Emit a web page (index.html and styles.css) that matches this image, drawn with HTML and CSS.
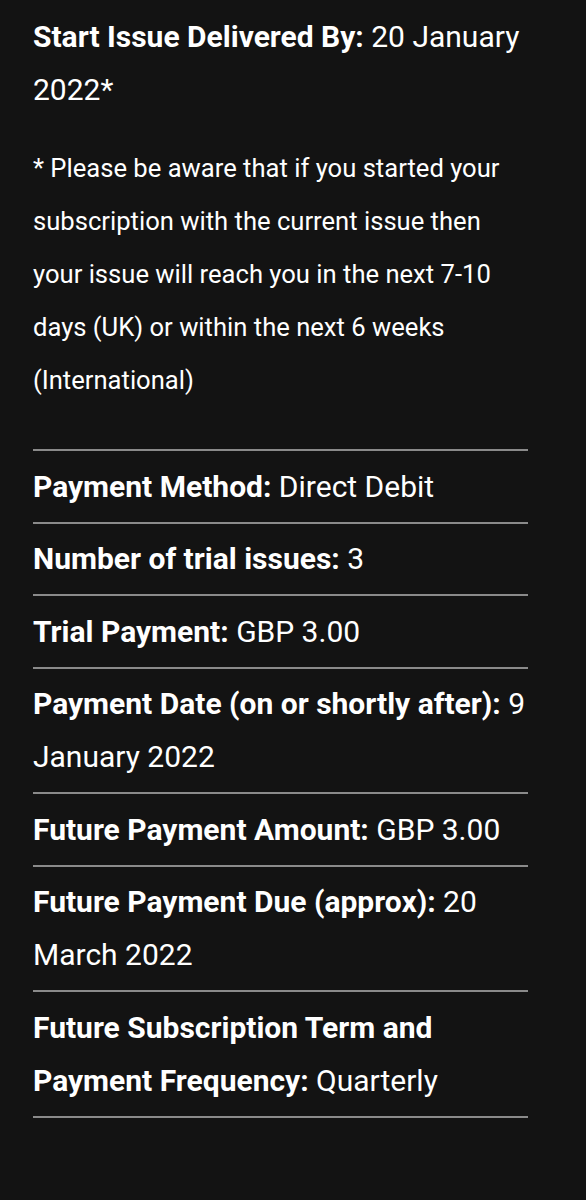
FILE: index.html
```html
<!DOCTYPE html>
<html lang="en">
<head>
<meta charset="utf-8">
<title>Subscription details</title>
<link rel="stylesheet" href="styles.css">
</head>
<body>
<main class="details">
  <p class="start"><strong>Start Issue Delivered By:</strong> 20 January 2022*</p>
  <p class="note">* Please be aware that if you started your subscription with the current issue then your issue will reach you in the next 7-10 days (UK) or within the next 6 weeks (International)</p>
  <ul class="rows">
    <li class="row"><strong>Payment Method:</strong> Direct Debit</li>
    <li class="row"><strong>Number of trial issues:</strong> 3</li>
    <li class="row"><strong>Trial Payment:</strong> GBP 3.00</li>
    <li class="row"><strong>Payment Date (on or shortly after):</strong> 9 January 2022</li>
    <li class="row"><strong>Future Payment Amount:</strong> GBP 3.00</li>
    <li class="row"><strong>Future Payment Due (approx):</strong> 20 March 2022</li>
    <li class="row"><strong>Future Subscription Term and Payment Frequency:</strong> Quarterly</li>
  </ul>
</main>
</body>
</html>
```
FILE: styles.css
```css
html, body {
  margin: 0;
  padding: 0;
  background: #131313;
}
body {
  color: #ffffff;
  font-family: Roboto, "Noto Sans", sans-serif;
  font-size: 30px;
  line-height: 53px;
}
.details {
  width: 495px;
  padding: 10px 0 0 33px;
}
.details p {
  margin: 0;
}
.start {
  margin-bottom: 26px !important;
}
.note {
  font-size: 25.6px;
  margin-bottom: 42px !important;
}
strong {
  font-weight: 700;
}
.rows {
  list-style: none;
  margin: 0;
  padding: 0;
  border-top: 2px solid #8a8a8a;
}
.row {
  padding: 8.75px 0;
  border-bottom: 2px solid #8a8a8a;
}
```
